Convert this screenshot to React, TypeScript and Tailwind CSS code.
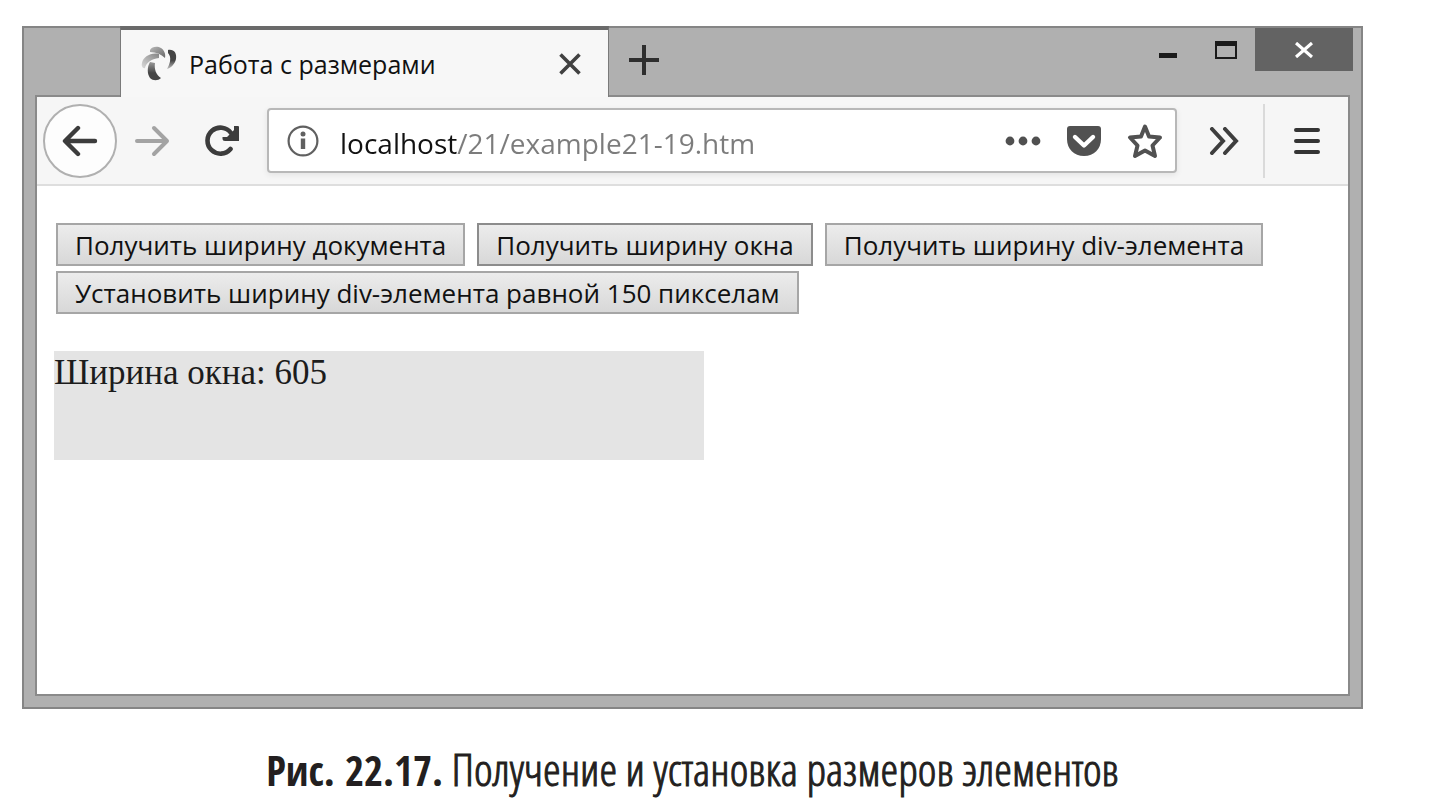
import type { ReactNode } from "react";

function PageButton({ children, active = false }: { children: ReactNode; active?: boolean }) {
  return (
    <button
      type="button"
      className={`h-[43px] border-2 bg-linear-to-b from-[#ececec] to-[#d8d8d8] px-[17px] font-['Open_Sans','Noto_Sans',sans-serif] text-[26px] leading-[38px] whitespace-nowrap text-[#111111] ${
        active ? "border-[#8c8c8c]" : "border-[#a6a6a6]"
      }`}
    >
      {children}
    </button>
  );
}

function SiteIcon() {
  return (
    <svg viewBox="0 0 36 36" className="size-9 shrink-0" aria-hidden="true">
      <defs>
        <linearGradient id="petalTop" x1="0" y1="0" x2="1" y2="1">
          <stop offset="0" stopColor="#b8b8b8" />
          <stop offset="1" stopColor="#686868" />
        </linearGradient>
        <linearGradient id="petalLeft" x1="1" y1="0" x2="0" y2="1">
          <stop offset="0" stopColor="#858585" />
          <stop offset="1" stopColor="#dadada" />
        </linearGradient>
        <linearGradient id="petalDown" x1="0" y1="0" x2="0" y2="1">
          <stop offset="0" stopColor="#9a9a9a" />
          <stop offset="0.6" stopColor="#454545" />
        </linearGradient>
        <linearGradient id="petalRight" x1="0" y1="0" x2="0" y2="1">
          <stop offset="0" stopColor="#454545" />
          <stop offset="0.55" stopColor="#454545" />
          <stop offset="1" stopColor="#c0c0c0" />
        </linearGradient>
      </defs>
      <path d="M9 4C11 0 17 0 20 2C23 4 25 8 24 12C20 8 15 6 9 6Z" fill="url(#petalTop)" />
      <path d="M18 8C10 6 2 11 1 17C0 20 2 23 4 22C5 17 10 13 18 12Z" fill="url(#petalLeft)" />
      <path d="M9 16C6 21 6 28 9 32C12 35 17 35 20 32C15 29 13 23 14 17Z" fill="url(#petalDown)" />
      <path d="M27 4C33 3 36 7 35 13C34 18 30 22 26 23C29 18 31 11 27 7Z" fill="url(#petalRight)" />
    </svg>
  );
}

function TitleBar() {
  return (
    <div className="flex h-[67px] items-start">
      <div className="relative -mt-[2px] -mb-[2px] ml-24 flex h-[71px] w-[489px] shrink-0 items-center border-x border-t-4 border-x-[#7a7a7a] border-t-[#6a6a6a] bg-[#f7f7f7] px-5">
        <SiteIcon />
        <span className="ml-3 flex-1 font-['Open_Sans','Noto_Sans',sans-serif] text-[25px] leading-8 whitespace-nowrap text-[#111111]">
          Работа с размерами
        </span>
        <button type="button" aria-label="Закрыть вкладку" className="grid size-9 place-items-center">
          <svg viewBox="0 0 22 22" className="size-[22px]" fill="none" stroke="#414141" strokeWidth="3.6">
            <path d="M1.500 1.500L20.500 20.500M20.500 1.500L1.500 20.500" />
          </svg>
        </button>
      </div>
      <button type="button" aria-label="Новая вкладка" className="grid h-16 w-[70px] place-items-center">
        <svg viewBox="0 0 32 32" className="size-8" fill="none" stroke="#2e2e2e" strokeWidth="4">
          <path d="M16 1V31M1 16H31" />
        </svg>
      </button>
      <div className="mr-2 ml-auto flex">
        <button type="button" aria-label="Свернуть" className="grid h-[43px] w-[58px] place-items-center">
          <svg viewBox="0 0 18 18" className="size-[18px]" fill="#1a1a1a">
            <path d="M0 12H18V17H0Z" />
          </svg>
        </button>
        <button type="button" aria-label="Развернуть" className="grid h-[43px] w-[58px] place-items-center">
          <svg viewBox="0 0 22 18" className="h-[18px] w-[22px]" fill="#1a1a1a" fillRule="evenodd">
            <path d="M0 0H22V18H0ZM2 5V16H20V5Z" />
          </svg>
        </button>
        <button type="button" aria-label="Закрыть" className="grid h-[43px] w-[98px] place-items-center bg-[#636363]">
          <svg viewBox="0 0 18 16" className="h-4 w-[18px]" fill="none" stroke="#fff" strokeWidth="3.2">
            <path d="M1 1L17 15M17 1L1 15" />
          </svg>
        </button>
      </div>
    </div>
  );
}

function Toolbar() {
  return (
    <div className="flex h-[89px] items-center border-b-2 border-[#dedede] bg-[#f6f6f6] pl-[6px]">
      <button
        type="button"
        aria-label="Назад"
        className="grid size-[74px] shrink-0 place-items-center rounded-full border-2 border-[#b0b0b0] bg-[#fdfdfd]"
      >
        <svg viewBox="0 0 36 32" className="h-8 w-9" fill="none" stroke="#3c3c3c" strokeWidth="4.4" strokeLinecap="round" strokeLinejoin="round">
          <path d="M33 16H4M16 3L3 16L16 29" />
        </svg>
      </button>
      <button type="button" aria-label="Вперёд" className="grid h-16 w-[70px] shrink-0 place-items-center">
        <svg viewBox="0 0 36 32" className="h-8 w-9" fill="none" stroke="#a3a3a3" strokeWidth="4" strokeLinecap="round" strokeLinejoin="round">
          <path d="M3 16H32M20 3L33 16L20 29" />
        </svg>
      </button>
      <button type="button" aria-label="Обновить" className="grid h-16 w-[70px] shrink-0 place-items-center">
        <svg viewBox="0 0 34 32" className="h-8 w-[34px]" fill="none" stroke="#3c3c3c" strokeWidth="4.6">
          <path d="M25.500 24A13 13 0 1 1 26 8" strokeLinecap="round" />
          <path d="M29 1H33Q34 1 34 2V16H20Q17.500 16 17.500 14V12H22L29 5Z" fill="#3c3c3c" stroke="none" />
        </svg>
      </button>
      <div className="ml-[10px] flex h-[65px] flex-1 items-center rounded-[4px] border-2 border-[#b8b8b8] bg-white pl-[18px] shadow-[0_2px_6px_rgba(0,0,0,0.08)]">
        <svg viewBox="0 0 32 32" className="size-8 shrink-0" fill="none" stroke="#606060" aria-hidden="true">
          <circle cx="16" cy="16" r="14.4" strokeWidth="2.2" />
          <path d="M16 13.500V24" strokeWidth="4.4" />
          <circle cx="16" cy="9" r="2.500" fill="#606060" stroke="none" />
        </svg>
        <input
          type="text"
          aria-label="Адрес"
          defaultValue="localhost/21/example21-19.htm"
          className="ml-[21px] h-12 min-w-0 flex-1 bg-linear-to-r from-[#111111] from-[117px] to-[#7c7c7c] to-[117px] bg-clip-text pt-1 font-['Open_Sans','Noto_Sans',sans-serif] text-[28px] text-transparent outline-none"
        />
        <button type="button" aria-label="Действия" className="grid h-12 w-[60px] shrink-0 place-items-center">
          <svg viewBox="0 0 36 10" className="h-[10px] w-9" fill="#505050">
            <circle cx="5" cy="5" r="4.400" />
            <circle cx="18" cy="5" r="4.400" />
            <circle cx="31" cy="5" r="4.400" />
          </svg>
        </button>
        <button type="button" aria-label="Сохранить в Pocket" className="grid h-12 w-[62px] shrink-0 place-items-center">
          <svg viewBox="0 0 36 32" className="h-8 w-9">
            <path d="M4 1H32Q35 1 35 4V14C35 24 28 31 18 31S1 24 1 14V4Q1 1 4 1Z" fill="#515151" />
            <path d="M9 12L18 20.500L27 12" fill="none" stroke="#fff" strokeWidth="4.400" strokeLinecap="round" strokeLinejoin="round" />
          </svg>
        </button>
        <button type="button" aria-label="Добавить в закладки" className="grid h-12 w-[60px] shrink-0 place-items-center">
          <svg viewBox="0 0 36 36" className="size-9" fill="none" stroke="#515151" strokeWidth="4" strokeLinejoin="round">
            <path d="M18 3.500L22 13.500L33 14.500L25.500 22.500L28 33L18 27.500L8 33L10.500 22.500L3 14.500L14 13.500Z" />
          </svg>
        </button>
      </div>
      <button type="button" aria-label="Другие инструменты" className="grid h-16 w-[86px] shrink-0 place-items-center pl-2">
        <svg viewBox="0 0 30 28" className="h-7 w-[30px]" fill="none" stroke="#3e3e3e" strokeWidth="4">
          <path d="M3 2L14 14L3 26M16 2L27 14L16 26" strokeLinecap="round" />
        </svg>
      </button>
      <div className="h-[74px] w-[2px] bg-[#dadada]" />
      <button type="button" aria-label="Меню" className="grid h-16 w-[83px] shrink-0 place-items-center">
        <svg viewBox="0 0 26 28" className="h-7 w-[26px]" fill="none" stroke="#343434" strokeWidth="4" strokeLinecap="round">
          <path d="M2 3H24M2 14H24M2 25H24" />
        </svg>
      </button>
    </div>
  );
}

export default function App() {
  return (
    <main className="min-h-screen bg-white pt-[26px] pr-[71px] pl-[22px]">
      <figure>
        <div className="border-2 border-[#858585] bg-[#b0b0b0]">
          <TitleBar />
          <div className="mx-[11px] mb-[11px] border-2 border-[#8a8a8a] bg-white">
            <Toolbar />
            <div className="px-[17px] pt-[37px] pb-[234px]">
              <div className="flex flex-wrap gap-x-3 gap-y-[5px] pl-[2px]">
                <PageButton>Получить ширину документа</PageButton>
                <PageButton active>Получить ширину окна</PageButton>
                <PageButton>Получить ширину div-элемента</PageButton>
                <PageButton>Установить ширину div-элемента равной 150 пикселам</PageButton>
              </div>
              <div className="mt-[37px] h-[109px] w-[650px] bg-[#e4e4e4] pt-[2px] font-['Liberation_Serif',serif] text-[35px] leading-10 text-[#1c1c1c]">
                Ширина окна: 605
              </div>
            </div>
          </div>
        </div>
        <figcaption className="mt-8 text-center font-['Open_Sans_Condensed_Light','Open_Sans_Condensed',sans-serif] text-[45px] leading-[56px] text-[#231f20]">
          <b className="font-['Open_Sans_Condensed',sans-serif] text-[41px] font-bold">Рис. 22.17.</b>{" "}
          <span className="[-webkit-text-stroke:1px_#231f20]">Получение и установка размеров элементов</span>
        </figcaption>
      </figure>
    </main>
  );
}
